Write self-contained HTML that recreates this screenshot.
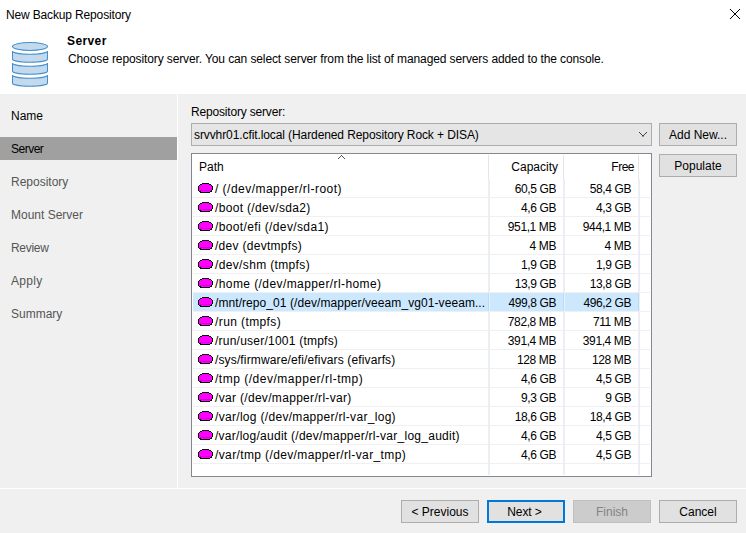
<!DOCTYPE html>
<html><head><meta charset="utf-8">
<style>
*{box-sizing:border-box}
html,body{margin:0;padding:0}
body{width:746px;height:533px;overflow:hidden;background:#f0f0f0;position:relative;font-family:"Liberation Sans",sans-serif;font-size:12px;color:#000}
.a{position:absolute;white-space:nowrap;line-height:15px}
#hdr{position:absolute;left:0;top:0;width:746px;height:94px;background:#fff}
#vline{position:absolute;left:177px;top:94px;width:1px;height:394px;background:#fff}
#hline{position:absolute;left:0;top:488px;width:746px;height:1px;background:#fff}
.nav{position:absolute;left:11px;color:#555}
#navsel{position:absolute;left:0;top:137px;width:177px;height:23px;background:#a0a0a0}
.btn{position:absolute;height:23px;width:78px;background:#e1e1e1;border:1px solid #adadad;text-align:center;line-height:15px;padding-top:4px}
#combo{position:absolute;left:191px;top:123px;width:461px;height:23px;background:#e5e5e5;border:1px solid #adadad}
#list{position:absolute;left:191px;top:153px;width:461px;height:324px;background:#fff;border:1px solid #828790;overflow:hidden}
.row{position:absolute;left:1px;width:459px;height:19px}
.gl{position:absolute;background:#f0f0f0}
.cl{position:absolute;width:1px;background:#e5e5e5}
.r{text-align:right}
</style></head><body>
<div id="hdr"></div>
<div class="a" style="left:6px;top:8px;letter-spacing:-0.15px">New Backup Repository</div>
<svg style="position:absolute;left:730px;top:9px" width="10" height="10" viewBox="0 0 10 10" shape-rendering="crispEdges" fill="#000"><rect x="0" y="0" width="1" height="1"/><rect x="9" y="0" width="1" height="1"/><rect x="1" y="1" width="1" height="1"/><rect x="8" y="1" width="1" height="1"/><rect x="2" y="2" width="1" height="1"/><rect x="7" y="2" width="1" height="1"/><rect x="3" y="3" width="1" height="1"/><rect x="6" y="3" width="1" height="1"/><rect x="4" y="4" width="1" height="1"/><rect x="5" y="4" width="1" height="1"/><rect x="5" y="5" width="1" height="1"/><rect x="4" y="5" width="1" height="1"/><rect x="6" y="6" width="1" height="1"/><rect x="3" y="6" width="1" height="1"/><rect x="7" y="7" width="1" height="1"/><rect x="2" y="7" width="1" height="1"/><rect x="8" y="8" width="1" height="1"/><rect x="1" y="8" width="1" height="1"/><rect x="9" y="9" width="1" height="1"/><rect x="0" y="9" width="1" height="1"/></svg>
<svg style="position:absolute;left:0;top:0" width="60" height="94" viewBox="0 0 60 94"><g fill="#c2d9ee" stroke="#4590cc" stroke-width="1.05"><ellipse cx="30" cy="46.5" rx="17.5" ry="4"/><path d="M12.5,51 A17.5,3.3 0 0 0 47.5,51 L47.5,59 A17.5,3.3 0 0 1 12.5,59 Z"/><path d="M12.5,63 A17.5,3.3 0 0 0 47.5,63 L47.5,71 A17.5,3.3 0 0 1 12.5,71 Z"/><path d="M12.5,75 A17.5,3.3 0 0 0 47.5,75 L47.5,83 A17.5,3.3 0 0 1 12.5,83 Z"/></g></svg>
<div class="a" style="left:67px;top:34px;font-weight:bold;letter-spacing:0.4px">Server</div>
<div class="a" style="left:68px;top:52px;letter-spacing:-0.109px">Choose repository server. You can select server from the list of managed servers added to the console.</div>

<div id="vline"></div>
<div id="hline"></div>
<div id="navsel"></div>
<div class="a nav" style="top:109px;color:#000">Name</div>
<div class="a nav" style="top:142px;color:#000;letter-spacing:-0.5px">Server</div>
<div class="a nav" style="top:175px">Repository</div>
<div class="a nav" style="top:208px">Mount Server</div>
<div class="a nav" style="top:241px;letter-spacing:-0.3px">Review</div>
<div class="a nav" style="top:274px;letter-spacing:0.3px">Apply</div>
<div class="a nav" style="top:307px">Summary</div>

<div class="a" style="left:191px;top:105px;letter-spacing:-0.18px">Repository server:</div>
<div id="combo"></div>
<div class="a" style="left:194px;top:128px;letter-spacing:-0.096px">srvvhr01.cfit.local (Hardened Repository Rock + DISA)</div>
<svg style="position:absolute;left:639px;top:132px" width="8" height="5" viewBox="0 0 8 5" shape-rendering="crispEdges" fill="#404040"><rect x="0" y="0" width="1" height="1"/><rect x="7" y="0" width="1" height="1"/><rect x="1" y="1" width="1" height="1"/><rect x="6" y="1" width="1" height="1"/><rect x="2" y="2" width="1" height="1"/><rect x="5" y="2" width="1" height="1"/><rect x="3" y="3" width="1" height="1"/><rect x="4" y="3" width="1" height="1"/><rect x="3" y="4" width="2" height="1" fill="#909090"/></svg>
<div class="btn" style="left:659px;top:123px">Add New...</div>
<div class="btn" style="left:659px;top:154px">Populate</div>

<div style="position:absolute;left:191px;top:153px;width:461px;height:324px;background:#fff;border:1px solid #828790"></div>
<div style="position:absolute;left:488px;top:155px;width:1px;height:24px;background:#e5e5e5"></div>
<div style="position:absolute;left:563px;top:155px;width:1px;height:24px;background:#e5e5e5"></div>
<div style="position:absolute;left:638px;top:155px;width:1px;height:24px;background:#e5e5e5"></div>
<svg style="position:absolute;left:338px;top:155px" width="7" height="4" viewBox="0 0 7 4" shape-rendering="crispEdges" fill="#505050"><rect x="3" y="0" width="1" height="1"/><rect x="2" y="1" width="1" height="1"/><rect x="4" y="1" width="1" height="1"/><rect x="1" y="2" width="1" height="1"/><rect x="5" y="2" width="1" height="1"/><rect x="0" y="3" width="1" height="1"/><rect x="6" y="3" width="1" height="1"/></svg>
<div class="a" style="left:199px;top:160px">Path</div>
<div class="a r" style="right:188px;top:160px">Capacity</div>
<div class="a r" style="right:112px;top:160px;letter-spacing:-0.5px">Free</div>
<div style="position:absolute;left:488px;top:179px;width:1px;height:296px;background:#e8f0fb"></div>
<div style="position:absolute;left:563px;top:179px;width:1px;height:296px;background:#e8f0fb"></div>
<div style="position:absolute;left:638px;top:179px;width:1px;height:296px;background:#e8f0fb"></div>
<div style="position:absolute;left:193px;top:197px;width:457px;height:1px;background:#f0f0f0"></div>
<div style="position:absolute;left:193px;top:216px;width:457px;height:1px;background:#f0f0f0"></div>
<div style="position:absolute;left:193px;top:235px;width:457px;height:1px;background:#f0f0f0"></div>
<div style="position:absolute;left:193px;top:254px;width:457px;height:1px;background:#f0f0f0"></div>
<div style="position:absolute;left:193px;top:273px;width:457px;height:1px;background:#f0f0f0"></div>
<div style="position:absolute;left:193px;top:292px;width:457px;height:1px;background:#f0f0f0"></div>
<div style="position:absolute;left:193px;top:311px;width:457px;height:1px;background:#f0f0f0"></div>
<div style="position:absolute;left:193px;top:330px;width:457px;height:1px;background:#f0f0f0"></div>
<div style="position:absolute;left:193px;top:349px;width:457px;height:1px;background:#f0f0f0"></div>
<div style="position:absolute;left:193px;top:368px;width:457px;height:1px;background:#f0f0f0"></div>
<div style="position:absolute;left:193px;top:387px;width:457px;height:1px;background:#f0f0f0"></div>
<div style="position:absolute;left:193px;top:406px;width:457px;height:1px;background:#f0f0f0"></div>
<div style="position:absolute;left:193px;top:425px;width:457px;height:1px;background:#f0f0f0"></div>
<div style="position:absolute;left:193px;top:444px;width:457px;height:1px;background:#f0f0f0"></div>
<div style="position:absolute;left:193px;top:463px;width:457px;height:1px;background:#f0f0f0"></div>
<div style="position:absolute;left:489px;top:179px;width:1px;height:296px;background:#ececec"></div>
<div style="position:absolute;left:564px;top:179px;width:1px;height:296px;background:#ececec"></div>
<div style="position:absolute;left:639px;top:179px;width:1px;height:296px;background:#ececec"></div>
<svg style="position:absolute;left:198px;top:183px" width="15" height="10" viewBox="0 0 15 10" shape-rendering="crispEdges"><rect x="4" y="0" width="7" height="1" fill="#000"/><rect x="2" y="1" width="2" height="1" fill="#000"/><rect x="4" y="1" width="7" height="1" fill="#ff00ff"/><rect x="11" y="1" width="2" height="1" fill="#000"/><rect x="1" y="2" width="1" height="1" fill="#000"/><rect x="2" y="2" width="11" height="1" fill="#ff00ff"/><rect x="13" y="2" width="1" height="1" fill="#000"/><rect x="0" y="3" width="1" height="1" fill="#000"/><rect x="1" y="3" width="13" height="1" fill="#ff00ff"/><rect x="14" y="3" width="1" height="1" fill="#000"/><rect x="0" y="4" width="1" height="1" fill="#000"/><rect x="1" y="4" width="13" height="1" fill="#ff00ff"/><rect x="14" y="4" width="1" height="1" fill="#000"/><rect x="0" y="5" width="1" height="1" fill="#000"/><rect x="1" y="5" width="13" height="1" fill="#ff00ff"/><rect x="14" y="5" width="1" height="1" fill="#000"/><rect x="0" y="6" width="1" height="1" fill="#000"/><rect x="1" y="6" width="13" height="1" fill="#ff00ff"/><rect x="14" y="6" width="1" height="1" fill="#000"/><rect x="0" y="7" width="1" height="1" fill="#000"/><rect x="1" y="7" width="12" height="1" fill="#ff00ff"/><rect x="13" y="7" width="1" height="1" fill="#000"/><rect x="1" y="8" width="2" height="1" fill="#000"/><rect x="3" y="8" width="9" height="1" fill="#ff00ff"/><rect x="12" y="8" width="2" height="1" fill="#000"/><rect x="2" y="9" width="10" height="1" fill="#000"/><rect x="2" y="7" width="10" height="1" fill="#d800d8"/></svg>
<div class="a" style="left:215px;top:182px;letter-spacing:0.477px">/ (/dev/mapper/rl-root)</div>
<div class="a r v" style="right:190px;top:182px;letter-spacing:-0.4px">60,5 GB</div>
<div class="a r v" style="right:115px;top:182px;letter-spacing:-0.4px">58,4 GB</div>
<svg style="position:absolute;left:198px;top:202px" width="15" height="10" viewBox="0 0 15 10" shape-rendering="crispEdges"><rect x="4" y="0" width="7" height="1" fill="#000"/><rect x="2" y="1" width="2" height="1" fill="#000"/><rect x="4" y="1" width="7" height="1" fill="#ff00ff"/><rect x="11" y="1" width="2" height="1" fill="#000"/><rect x="1" y="2" width="1" height="1" fill="#000"/><rect x="2" y="2" width="11" height="1" fill="#ff00ff"/><rect x="13" y="2" width="1" height="1" fill="#000"/><rect x="0" y="3" width="1" height="1" fill="#000"/><rect x="1" y="3" width="13" height="1" fill="#ff00ff"/><rect x="14" y="3" width="1" height="1" fill="#000"/><rect x="0" y="4" width="1" height="1" fill="#000"/><rect x="1" y="4" width="13" height="1" fill="#ff00ff"/><rect x="14" y="4" width="1" height="1" fill="#000"/><rect x="0" y="5" width="1" height="1" fill="#000"/><rect x="1" y="5" width="13" height="1" fill="#ff00ff"/><rect x="14" y="5" width="1" height="1" fill="#000"/><rect x="0" y="6" width="1" height="1" fill="#000"/><rect x="1" y="6" width="13" height="1" fill="#ff00ff"/><rect x="14" y="6" width="1" height="1" fill="#000"/><rect x="0" y="7" width="1" height="1" fill="#000"/><rect x="1" y="7" width="12" height="1" fill="#ff00ff"/><rect x="13" y="7" width="1" height="1" fill="#000"/><rect x="1" y="8" width="2" height="1" fill="#000"/><rect x="3" y="8" width="9" height="1" fill="#ff00ff"/><rect x="12" y="8" width="2" height="1" fill="#000"/><rect x="2" y="9" width="10" height="1" fill="#000"/><rect x="2" y="7" width="10" height="1" fill="#d800d8"/></svg>
<div class="a" style="left:215px;top:201px;letter-spacing:0.331px">/boot (/dev/sda2)</div>
<div class="a r v" style="right:190px;top:201px;letter-spacing:-0.4px">4,6 GB</div>
<div class="a r v" style="right:115px;top:201px;letter-spacing:-0.4px">4,3 GB</div>
<svg style="position:absolute;left:198px;top:221px" width="15" height="10" viewBox="0 0 15 10" shape-rendering="crispEdges"><rect x="4" y="0" width="7" height="1" fill="#000"/><rect x="2" y="1" width="2" height="1" fill="#000"/><rect x="4" y="1" width="7" height="1" fill="#ff00ff"/><rect x="11" y="1" width="2" height="1" fill="#000"/><rect x="1" y="2" width="1" height="1" fill="#000"/><rect x="2" y="2" width="11" height="1" fill="#ff00ff"/><rect x="13" y="2" width="1" height="1" fill="#000"/><rect x="0" y="3" width="1" height="1" fill="#000"/><rect x="1" y="3" width="13" height="1" fill="#ff00ff"/><rect x="14" y="3" width="1" height="1" fill="#000"/><rect x="0" y="4" width="1" height="1" fill="#000"/><rect x="1" y="4" width="13" height="1" fill="#ff00ff"/><rect x="14" y="4" width="1" height="1" fill="#000"/><rect x="0" y="5" width="1" height="1" fill="#000"/><rect x="1" y="5" width="13" height="1" fill="#ff00ff"/><rect x="14" y="5" width="1" height="1" fill="#000"/><rect x="0" y="6" width="1" height="1" fill="#000"/><rect x="1" y="6" width="13" height="1" fill="#ff00ff"/><rect x="14" y="6" width="1" height="1" fill="#000"/><rect x="0" y="7" width="1" height="1" fill="#000"/><rect x="1" y="7" width="12" height="1" fill="#ff00ff"/><rect x="13" y="7" width="1" height="1" fill="#000"/><rect x="1" y="8" width="2" height="1" fill="#000"/><rect x="3" y="8" width="9" height="1" fill="#ff00ff"/><rect x="12" y="8" width="2" height="1" fill="#000"/><rect x="2" y="9" width="10" height="1" fill="#000"/><rect x="2" y="7" width="10" height="1" fill="#d800d8"/></svg>
<div class="a" style="left:215px;top:220px;letter-spacing:0.370px">/boot/efi (/dev/sda1)</div>
<div class="a r v" style="right:190px;top:220px;letter-spacing:-0.4px">951,1 MB</div>
<div class="a r v" style="right:115px;top:220px;letter-spacing:-0.4px">944,1 MB</div>
<svg style="position:absolute;left:198px;top:240px" width="15" height="10" viewBox="0 0 15 10" shape-rendering="crispEdges"><rect x="4" y="0" width="7" height="1" fill="#000"/><rect x="2" y="1" width="2" height="1" fill="#000"/><rect x="4" y="1" width="7" height="1" fill="#ff00ff"/><rect x="11" y="1" width="2" height="1" fill="#000"/><rect x="1" y="2" width="1" height="1" fill="#000"/><rect x="2" y="2" width="11" height="1" fill="#ff00ff"/><rect x="13" y="2" width="1" height="1" fill="#000"/><rect x="0" y="3" width="1" height="1" fill="#000"/><rect x="1" y="3" width="13" height="1" fill="#ff00ff"/><rect x="14" y="3" width="1" height="1" fill="#000"/><rect x="0" y="4" width="1" height="1" fill="#000"/><rect x="1" y="4" width="13" height="1" fill="#ff00ff"/><rect x="14" y="4" width="1" height="1" fill="#000"/><rect x="0" y="5" width="1" height="1" fill="#000"/><rect x="1" y="5" width="13" height="1" fill="#ff00ff"/><rect x="14" y="5" width="1" height="1" fill="#000"/><rect x="0" y="6" width="1" height="1" fill="#000"/><rect x="1" y="6" width="13" height="1" fill="#ff00ff"/><rect x="14" y="6" width="1" height="1" fill="#000"/><rect x="0" y="7" width="1" height="1" fill="#000"/><rect x="1" y="7" width="12" height="1" fill="#ff00ff"/><rect x="13" y="7" width="1" height="1" fill="#000"/><rect x="1" y="8" width="2" height="1" fill="#000"/><rect x="3" y="8" width="9" height="1" fill="#ff00ff"/><rect x="12" y="8" width="2" height="1" fill="#000"/><rect x="2" y="9" width="10" height="1" fill="#000"/><rect x="2" y="7" width="10" height="1" fill="#d800d8"/></svg>
<div class="a" style="left:215px;top:239px;letter-spacing:0.286px">/dev (devtmpfs)</div>
<div class="a r v" style="right:190px;top:239px;letter-spacing:-0.4px">4 MB</div>
<div class="a r v" style="right:115px;top:239px;letter-spacing:-0.4px">4 MB</div>
<svg style="position:absolute;left:198px;top:259px" width="15" height="10" viewBox="0 0 15 10" shape-rendering="crispEdges"><rect x="4" y="0" width="7" height="1" fill="#000"/><rect x="2" y="1" width="2" height="1" fill="#000"/><rect x="4" y="1" width="7" height="1" fill="#ff00ff"/><rect x="11" y="1" width="2" height="1" fill="#000"/><rect x="1" y="2" width="1" height="1" fill="#000"/><rect x="2" y="2" width="11" height="1" fill="#ff00ff"/><rect x="13" y="2" width="1" height="1" fill="#000"/><rect x="0" y="3" width="1" height="1" fill="#000"/><rect x="1" y="3" width="13" height="1" fill="#ff00ff"/><rect x="14" y="3" width="1" height="1" fill="#000"/><rect x="0" y="4" width="1" height="1" fill="#000"/><rect x="1" y="4" width="13" height="1" fill="#ff00ff"/><rect x="14" y="4" width="1" height="1" fill="#000"/><rect x="0" y="5" width="1" height="1" fill="#000"/><rect x="1" y="5" width="13" height="1" fill="#ff00ff"/><rect x="14" y="5" width="1" height="1" fill="#000"/><rect x="0" y="6" width="1" height="1" fill="#000"/><rect x="1" y="6" width="13" height="1" fill="#ff00ff"/><rect x="14" y="6" width="1" height="1" fill="#000"/><rect x="0" y="7" width="1" height="1" fill="#000"/><rect x="1" y="7" width="12" height="1" fill="#ff00ff"/><rect x="13" y="7" width="1" height="1" fill="#000"/><rect x="1" y="8" width="2" height="1" fill="#000"/><rect x="3" y="8" width="9" height="1" fill="#ff00ff"/><rect x="12" y="8" width="2" height="1" fill="#000"/><rect x="2" y="9" width="10" height="1" fill="#000"/><rect x="2" y="7" width="10" height="1" fill="#d800d8"/></svg>
<div class="a" style="left:215px;top:258px;letter-spacing:0.353px">/dev/shm (tmpfs)</div>
<div class="a r v" style="right:190px;top:258px;letter-spacing:-0.4px">1,9 GB</div>
<div class="a r v" style="right:115px;top:258px;letter-spacing:-0.4px">1,9 GB</div>
<svg style="position:absolute;left:198px;top:278px" width="15" height="10" viewBox="0 0 15 10" shape-rendering="crispEdges"><rect x="4" y="0" width="7" height="1" fill="#000"/><rect x="2" y="1" width="2" height="1" fill="#000"/><rect x="4" y="1" width="7" height="1" fill="#ff00ff"/><rect x="11" y="1" width="2" height="1" fill="#000"/><rect x="1" y="2" width="1" height="1" fill="#000"/><rect x="2" y="2" width="11" height="1" fill="#ff00ff"/><rect x="13" y="2" width="1" height="1" fill="#000"/><rect x="0" y="3" width="1" height="1" fill="#000"/><rect x="1" y="3" width="13" height="1" fill="#ff00ff"/><rect x="14" y="3" width="1" height="1" fill="#000"/><rect x="0" y="4" width="1" height="1" fill="#000"/><rect x="1" y="4" width="13" height="1" fill="#ff00ff"/><rect x="14" y="4" width="1" height="1" fill="#000"/><rect x="0" y="5" width="1" height="1" fill="#000"/><rect x="1" y="5" width="13" height="1" fill="#ff00ff"/><rect x="14" y="5" width="1" height="1" fill="#000"/><rect x="0" y="6" width="1" height="1" fill="#000"/><rect x="1" y="6" width="13" height="1" fill="#ff00ff"/><rect x="14" y="6" width="1" height="1" fill="#000"/><rect x="0" y="7" width="1" height="1" fill="#000"/><rect x="1" y="7" width="12" height="1" fill="#ff00ff"/><rect x="13" y="7" width="1" height="1" fill="#000"/><rect x="1" y="8" width="2" height="1" fill="#000"/><rect x="3" y="8" width="9" height="1" fill="#ff00ff"/><rect x="12" y="8" width="2" height="1" fill="#000"/><rect x="2" y="9" width="10" height="1" fill="#000"/><rect x="2" y="7" width="10" height="1" fill="#d800d8"/></svg>
<div class="a" style="left:215px;top:277px;letter-spacing:0.412px">/home (/dev/mapper/rl-home)</div>
<div class="a r v" style="right:190px;top:277px;letter-spacing:-0.4px">13,9 GB</div>
<div class="a r v" style="right:115px;top:277px;letter-spacing:-0.4px">13,8 GB</div>
<div style="position:absolute;left:193px;top:293px;width:446px;height:18px;background:#cce8ff"></div>
<div style="position:absolute;left:488px;top:293px;width:1px;height:18px;background:#b7dcf9"></div>
<div style="position:absolute;left:489px;top:293px;width:1px;height:18px;background:#efefef"></div>
<div style="position:absolute;left:563px;top:293px;width:1px;height:18px;background:#b7dcf9"></div>
<div style="position:absolute;left:564px;top:293px;width:1px;height:18px;background:#efefef"></div>
<div style="position:absolute;left:638px;top:293px;width:1px;height:18px;background:#b7dcf9"></div>
<div style="position:absolute;left:639px;top:293px;width:1px;height:18px;background:#efefef"></div>
<svg style="position:absolute;left:198px;top:297px" width="15" height="10" viewBox="0 0 15 10" shape-rendering="crispEdges"><rect x="4" y="0" width="7" height="1" fill="#000"/><rect x="2" y="1" width="2" height="1" fill="#000"/><rect x="4" y="1" width="7" height="1" fill="#ff00ff"/><rect x="11" y="1" width="2" height="1" fill="#000"/><rect x="1" y="2" width="1" height="1" fill="#000"/><rect x="2" y="2" width="11" height="1" fill="#ff00ff"/><rect x="13" y="2" width="1" height="1" fill="#000"/><rect x="0" y="3" width="1" height="1" fill="#000"/><rect x="1" y="3" width="13" height="1" fill="#ff00ff"/><rect x="14" y="3" width="1" height="1" fill="#000"/><rect x="0" y="4" width="1" height="1" fill="#000"/><rect x="1" y="4" width="13" height="1" fill="#ff00ff"/><rect x="14" y="4" width="1" height="1" fill="#000"/><rect x="0" y="5" width="1" height="1" fill="#000"/><rect x="1" y="5" width="13" height="1" fill="#ff00ff"/><rect x="14" y="5" width="1" height="1" fill="#000"/><rect x="0" y="6" width="1" height="1" fill="#000"/><rect x="1" y="6" width="13" height="1" fill="#ff00ff"/><rect x="14" y="6" width="1" height="1" fill="#000"/><rect x="0" y="7" width="1" height="1" fill="#000"/><rect x="1" y="7" width="12" height="1" fill="#ff00ff"/><rect x="13" y="7" width="1" height="1" fill="#000"/><rect x="1" y="8" width="2" height="1" fill="#000"/><rect x="3" y="8" width="9" height="1" fill="#ff00ff"/><rect x="12" y="8" width="2" height="1" fill="#000"/><rect x="2" y="9" width="10" height="1" fill="#000"/><rect x="2" y="7" width="10" height="1" fill="#d800d8"/></svg>
<div class="a" style="left:215px;top:296px;letter-spacing:0.075px">/mnt/repo_01 (/dev/mapper/veeam_vg01-veeam...</div>
<div class="a r v" style="right:190px;top:296px;letter-spacing:-0.4px">499,8 GB</div>
<div class="a r v" style="right:115px;top:296px;letter-spacing:-0.4px">496,2 GB</div>
<svg style="position:absolute;left:198px;top:316px" width="15" height="10" viewBox="0 0 15 10" shape-rendering="crispEdges"><rect x="4" y="0" width="7" height="1" fill="#000"/><rect x="2" y="1" width="2" height="1" fill="#000"/><rect x="4" y="1" width="7" height="1" fill="#ff00ff"/><rect x="11" y="1" width="2" height="1" fill="#000"/><rect x="1" y="2" width="1" height="1" fill="#000"/><rect x="2" y="2" width="11" height="1" fill="#ff00ff"/><rect x="13" y="2" width="1" height="1" fill="#000"/><rect x="0" y="3" width="1" height="1" fill="#000"/><rect x="1" y="3" width="13" height="1" fill="#ff00ff"/><rect x="14" y="3" width="1" height="1" fill="#000"/><rect x="0" y="4" width="1" height="1" fill="#000"/><rect x="1" y="4" width="13" height="1" fill="#ff00ff"/><rect x="14" y="4" width="1" height="1" fill="#000"/><rect x="0" y="5" width="1" height="1" fill="#000"/><rect x="1" y="5" width="13" height="1" fill="#ff00ff"/><rect x="14" y="5" width="1" height="1" fill="#000"/><rect x="0" y="6" width="1" height="1" fill="#000"/><rect x="1" y="6" width="13" height="1" fill="#ff00ff"/><rect x="14" y="6" width="1" height="1" fill="#000"/><rect x="0" y="7" width="1" height="1" fill="#000"/><rect x="1" y="7" width="12" height="1" fill="#ff00ff"/><rect x="13" y="7" width="1" height="1" fill="#000"/><rect x="1" y="8" width="2" height="1" fill="#000"/><rect x="3" y="8" width="9" height="1" fill="#ff00ff"/><rect x="12" y="8" width="2" height="1" fill="#000"/><rect x="2" y="9" width="10" height="1" fill="#000"/><rect x="2" y="7" width="10" height="1" fill="#d800d8"/></svg>
<div class="a" style="left:215px;top:315px;letter-spacing:0.400px">/run (tmpfs)</div>
<div class="a r v" style="right:190px;top:315px;letter-spacing:-0.4px">782,8 MB</div>
<div class="a r v" style="right:115px;top:315px;letter-spacing:-0.4px">711 MB</div>
<svg style="position:absolute;left:198px;top:335px" width="15" height="10" viewBox="0 0 15 10" shape-rendering="crispEdges"><rect x="4" y="0" width="7" height="1" fill="#000"/><rect x="2" y="1" width="2" height="1" fill="#000"/><rect x="4" y="1" width="7" height="1" fill="#ff00ff"/><rect x="11" y="1" width="2" height="1" fill="#000"/><rect x="1" y="2" width="1" height="1" fill="#000"/><rect x="2" y="2" width="11" height="1" fill="#ff00ff"/><rect x="13" y="2" width="1" height="1" fill="#000"/><rect x="0" y="3" width="1" height="1" fill="#000"/><rect x="1" y="3" width="13" height="1" fill="#ff00ff"/><rect x="14" y="3" width="1" height="1" fill="#000"/><rect x="0" y="4" width="1" height="1" fill="#000"/><rect x="1" y="4" width="13" height="1" fill="#ff00ff"/><rect x="14" y="4" width="1" height="1" fill="#000"/><rect x="0" y="5" width="1" height="1" fill="#000"/><rect x="1" y="5" width="13" height="1" fill="#ff00ff"/><rect x="14" y="5" width="1" height="1" fill="#000"/><rect x="0" y="6" width="1" height="1" fill="#000"/><rect x="1" y="6" width="13" height="1" fill="#ff00ff"/><rect x="14" y="6" width="1" height="1" fill="#000"/><rect x="0" y="7" width="1" height="1" fill="#000"/><rect x="1" y="7" width="12" height="1" fill="#ff00ff"/><rect x="13" y="7" width="1" height="1" fill="#000"/><rect x="1" y="8" width="2" height="1" fill="#000"/><rect x="3" y="8" width="9" height="1" fill="#ff00ff"/><rect x="12" y="8" width="2" height="1" fill="#000"/><rect x="2" y="9" width="10" height="1" fill="#000"/><rect x="2" y="7" width="10" height="1" fill="#d800d8"/></svg>
<div class="a" style="left:215px;top:334px;letter-spacing:0.229px">/run/user/1001 (tmpfs)</div>
<div class="a r v" style="right:190px;top:334px;letter-spacing:-0.4px">391,4 MB</div>
<div class="a r v" style="right:115px;top:334px;letter-spacing:-0.4px">391,4 MB</div>
<svg style="position:absolute;left:198px;top:354px" width="15" height="10" viewBox="0 0 15 10" shape-rendering="crispEdges"><rect x="4" y="0" width="7" height="1" fill="#000"/><rect x="2" y="1" width="2" height="1" fill="#000"/><rect x="4" y="1" width="7" height="1" fill="#ff00ff"/><rect x="11" y="1" width="2" height="1" fill="#000"/><rect x="1" y="2" width="1" height="1" fill="#000"/><rect x="2" y="2" width="11" height="1" fill="#ff00ff"/><rect x="13" y="2" width="1" height="1" fill="#000"/><rect x="0" y="3" width="1" height="1" fill="#000"/><rect x="1" y="3" width="13" height="1" fill="#ff00ff"/><rect x="14" y="3" width="1" height="1" fill="#000"/><rect x="0" y="4" width="1" height="1" fill="#000"/><rect x="1" y="4" width="13" height="1" fill="#ff00ff"/><rect x="14" y="4" width="1" height="1" fill="#000"/><rect x="0" y="5" width="1" height="1" fill="#000"/><rect x="1" y="5" width="13" height="1" fill="#ff00ff"/><rect x="14" y="5" width="1" height="1" fill="#000"/><rect x="0" y="6" width="1" height="1" fill="#000"/><rect x="1" y="6" width="13" height="1" fill="#ff00ff"/><rect x="14" y="6" width="1" height="1" fill="#000"/><rect x="0" y="7" width="1" height="1" fill="#000"/><rect x="1" y="7" width="12" height="1" fill="#ff00ff"/><rect x="13" y="7" width="1" height="1" fill="#000"/><rect x="1" y="8" width="2" height="1" fill="#000"/><rect x="3" y="8" width="9" height="1" fill="#ff00ff"/><rect x="12" y="8" width="2" height="1" fill="#000"/><rect x="2" y="9" width="10" height="1" fill="#000"/><rect x="2" y="7" width="10" height="1" fill="#d800d8"/></svg>
<div class="a" style="left:215px;top:353px;letter-spacing:0.140px">/sys/firmware/efi/efivars (efivarfs)</div>
<div class="a r v" style="right:190px;top:353px;letter-spacing:-0.4px">128 MB</div>
<div class="a r v" style="right:115px;top:353px;letter-spacing:-0.4px">128 MB</div>
<svg style="position:absolute;left:198px;top:373px" width="15" height="10" viewBox="0 0 15 10" shape-rendering="crispEdges"><rect x="4" y="0" width="7" height="1" fill="#000"/><rect x="2" y="1" width="2" height="1" fill="#000"/><rect x="4" y="1" width="7" height="1" fill="#ff00ff"/><rect x="11" y="1" width="2" height="1" fill="#000"/><rect x="1" y="2" width="1" height="1" fill="#000"/><rect x="2" y="2" width="11" height="1" fill="#ff00ff"/><rect x="13" y="2" width="1" height="1" fill="#000"/><rect x="0" y="3" width="1" height="1" fill="#000"/><rect x="1" y="3" width="13" height="1" fill="#ff00ff"/><rect x="14" y="3" width="1" height="1" fill="#000"/><rect x="0" y="4" width="1" height="1" fill="#000"/><rect x="1" y="4" width="13" height="1" fill="#ff00ff"/><rect x="14" y="4" width="1" height="1" fill="#000"/><rect x="0" y="5" width="1" height="1" fill="#000"/><rect x="1" y="5" width="13" height="1" fill="#ff00ff"/><rect x="14" y="5" width="1" height="1" fill="#000"/><rect x="0" y="6" width="1" height="1" fill="#000"/><rect x="1" y="6" width="13" height="1" fill="#ff00ff"/><rect x="14" y="6" width="1" height="1" fill="#000"/><rect x="0" y="7" width="1" height="1" fill="#000"/><rect x="1" y="7" width="12" height="1" fill="#ff00ff"/><rect x="13" y="7" width="1" height="1" fill="#000"/><rect x="1" y="8" width="2" height="1" fill="#000"/><rect x="3" y="8" width="9" height="1" fill="#ff00ff"/><rect x="12" y="8" width="2" height="1" fill="#000"/><rect x="2" y="9" width="10" height="1" fill="#000"/><rect x="2" y="7" width="10" height="1" fill="#d800d8"/></svg>
<div class="a" style="left:215px;top:372px;letter-spacing:0.513px">/tmp (/dev/mapper/rl-tmp)</div>
<div class="a r v" style="right:190px;top:372px;letter-spacing:-0.4px">4,6 GB</div>
<div class="a r v" style="right:115px;top:372px;letter-spacing:-0.4px">4,5 GB</div>
<svg style="position:absolute;left:198px;top:392px" width="15" height="10" viewBox="0 0 15 10" shape-rendering="crispEdges"><rect x="4" y="0" width="7" height="1" fill="#000"/><rect x="2" y="1" width="2" height="1" fill="#000"/><rect x="4" y="1" width="7" height="1" fill="#ff00ff"/><rect x="11" y="1" width="2" height="1" fill="#000"/><rect x="1" y="2" width="1" height="1" fill="#000"/><rect x="2" y="2" width="11" height="1" fill="#ff00ff"/><rect x="13" y="2" width="1" height="1" fill="#000"/><rect x="0" y="3" width="1" height="1" fill="#000"/><rect x="1" y="3" width="13" height="1" fill="#ff00ff"/><rect x="14" y="3" width="1" height="1" fill="#000"/><rect x="0" y="4" width="1" height="1" fill="#000"/><rect x="1" y="4" width="13" height="1" fill="#ff00ff"/><rect x="14" y="4" width="1" height="1" fill="#000"/><rect x="0" y="5" width="1" height="1" fill="#000"/><rect x="1" y="5" width="13" height="1" fill="#ff00ff"/><rect x="14" y="5" width="1" height="1" fill="#000"/><rect x="0" y="6" width="1" height="1" fill="#000"/><rect x="1" y="6" width="13" height="1" fill="#ff00ff"/><rect x="14" y="6" width="1" height="1" fill="#000"/><rect x="0" y="7" width="1" height="1" fill="#000"/><rect x="1" y="7" width="12" height="1" fill="#ff00ff"/><rect x="13" y="7" width="1" height="1" fill="#000"/><rect x="1" y="8" width="2" height="1" fill="#000"/><rect x="3" y="8" width="9" height="1" fill="#ff00ff"/><rect x="12" y="8" width="2" height="1" fill="#000"/><rect x="2" y="9" width="10" height="1" fill="#000"/><rect x="2" y="7" width="10" height="1" fill="#d800d8"/></svg>
<div class="a" style="left:215px;top:391px;letter-spacing:0.317px">/var (/dev/mapper/rl-var)</div>
<div class="a r v" style="right:190px;top:391px;letter-spacing:-0.4px">9,3 GB</div>
<div class="a r v" style="right:115px;top:391px;letter-spacing:-0.4px">9 GB</div>
<svg style="position:absolute;left:198px;top:411px" width="15" height="10" viewBox="0 0 15 10" shape-rendering="crispEdges"><rect x="4" y="0" width="7" height="1" fill="#000"/><rect x="2" y="1" width="2" height="1" fill="#000"/><rect x="4" y="1" width="7" height="1" fill="#ff00ff"/><rect x="11" y="1" width="2" height="1" fill="#000"/><rect x="1" y="2" width="1" height="1" fill="#000"/><rect x="2" y="2" width="11" height="1" fill="#ff00ff"/><rect x="13" y="2" width="1" height="1" fill="#000"/><rect x="0" y="3" width="1" height="1" fill="#000"/><rect x="1" y="3" width="13" height="1" fill="#ff00ff"/><rect x="14" y="3" width="1" height="1" fill="#000"/><rect x="0" y="4" width="1" height="1" fill="#000"/><rect x="1" y="4" width="13" height="1" fill="#ff00ff"/><rect x="14" y="4" width="1" height="1" fill="#000"/><rect x="0" y="5" width="1" height="1" fill="#000"/><rect x="1" y="5" width="13" height="1" fill="#ff00ff"/><rect x="14" y="5" width="1" height="1" fill="#000"/><rect x="0" y="6" width="1" height="1" fill="#000"/><rect x="1" y="6" width="13" height="1" fill="#ff00ff"/><rect x="14" y="6" width="1" height="1" fill="#000"/><rect x="0" y="7" width="1" height="1" fill="#000"/><rect x="1" y="7" width="12" height="1" fill="#ff00ff"/><rect x="13" y="7" width="1" height="1" fill="#000"/><rect x="1" y="8" width="2" height="1" fill="#000"/><rect x="3" y="8" width="9" height="1" fill="#ff00ff"/><rect x="12" y="8" width="2" height="1" fill="#000"/><rect x="2" y="9" width="10" height="1" fill="#000"/><rect x="2" y="7" width="10" height="1" fill="#d800d8"/></svg>
<div class="a" style="left:215px;top:410px;letter-spacing:0.309px">/var/log (/dev/mapper/rl-var_log)</div>
<div class="a r v" style="right:190px;top:410px;letter-spacing:-0.4px">18,6 GB</div>
<div class="a r v" style="right:115px;top:410px;letter-spacing:-0.4px">18,4 GB</div>
<svg style="position:absolute;left:198px;top:430px" width="15" height="10" viewBox="0 0 15 10" shape-rendering="crispEdges"><rect x="4" y="0" width="7" height="1" fill="#000"/><rect x="2" y="1" width="2" height="1" fill="#000"/><rect x="4" y="1" width="7" height="1" fill="#ff00ff"/><rect x="11" y="1" width="2" height="1" fill="#000"/><rect x="1" y="2" width="1" height="1" fill="#000"/><rect x="2" y="2" width="11" height="1" fill="#ff00ff"/><rect x="13" y="2" width="1" height="1" fill="#000"/><rect x="0" y="3" width="1" height="1" fill="#000"/><rect x="1" y="3" width="13" height="1" fill="#ff00ff"/><rect x="14" y="3" width="1" height="1" fill="#000"/><rect x="0" y="4" width="1" height="1" fill="#000"/><rect x="1" y="4" width="13" height="1" fill="#ff00ff"/><rect x="14" y="4" width="1" height="1" fill="#000"/><rect x="0" y="5" width="1" height="1" fill="#000"/><rect x="1" y="5" width="13" height="1" fill="#ff00ff"/><rect x="14" y="5" width="1" height="1" fill="#000"/><rect x="0" y="6" width="1" height="1" fill="#000"/><rect x="1" y="6" width="13" height="1" fill="#ff00ff"/><rect x="14" y="6" width="1" height="1" fill="#000"/><rect x="0" y="7" width="1" height="1" fill="#000"/><rect x="1" y="7" width="12" height="1" fill="#ff00ff"/><rect x="13" y="7" width="1" height="1" fill="#000"/><rect x="1" y="8" width="2" height="1" fill="#000"/><rect x="3" y="8" width="9" height="1" fill="#ff00ff"/><rect x="12" y="8" width="2" height="1" fill="#000"/><rect x="2" y="9" width="10" height="1" fill="#000"/><rect x="2" y="7" width="10" height="1" fill="#d800d8"/></svg>
<div class="a" style="left:215px;top:429px;letter-spacing:0.268px">/var/log/audit (/dev/mapper/rl-var_log_audit)</div>
<div class="a r v" style="right:190px;top:429px;letter-spacing:-0.4px">4,6 GB</div>
<div class="a r v" style="right:115px;top:429px;letter-spacing:-0.4px">4,5 GB</div>
<svg style="position:absolute;left:198px;top:449px" width="15" height="10" viewBox="0 0 15 10" shape-rendering="crispEdges"><rect x="4" y="0" width="7" height="1" fill="#000"/><rect x="2" y="1" width="2" height="1" fill="#000"/><rect x="4" y="1" width="7" height="1" fill="#ff00ff"/><rect x="11" y="1" width="2" height="1" fill="#000"/><rect x="1" y="2" width="1" height="1" fill="#000"/><rect x="2" y="2" width="11" height="1" fill="#ff00ff"/><rect x="13" y="2" width="1" height="1" fill="#000"/><rect x="0" y="3" width="1" height="1" fill="#000"/><rect x="1" y="3" width="13" height="1" fill="#ff00ff"/><rect x="14" y="3" width="1" height="1" fill="#000"/><rect x="0" y="4" width="1" height="1" fill="#000"/><rect x="1" y="4" width="13" height="1" fill="#ff00ff"/><rect x="14" y="4" width="1" height="1" fill="#000"/><rect x="0" y="5" width="1" height="1" fill="#000"/><rect x="1" y="5" width="13" height="1" fill="#ff00ff"/><rect x="14" y="5" width="1" height="1" fill="#000"/><rect x="0" y="6" width="1" height="1" fill="#000"/><rect x="1" y="6" width="13" height="1" fill="#ff00ff"/><rect x="14" y="6" width="1" height="1" fill="#000"/><rect x="0" y="7" width="1" height="1" fill="#000"/><rect x="1" y="7" width="12" height="1" fill="#ff00ff"/><rect x="13" y="7" width="1" height="1" fill="#000"/><rect x="1" y="8" width="2" height="1" fill="#000"/><rect x="3" y="8" width="9" height="1" fill="#ff00ff"/><rect x="12" y="8" width="2" height="1" fill="#000"/><rect x="2" y="9" width="10" height="1" fill="#000"/><rect x="2" y="7" width="10" height="1" fill="#d800d8"/></svg>
<div class="a" style="left:215px;top:448px;letter-spacing:0.375px">/var/tmp (/dev/mapper/rl-var_tmp)</div>
<div class="a r v" style="right:190px;top:448px;letter-spacing:-0.4px">4,6 GB</div>
<div class="a r v" style="right:115px;top:448px;letter-spacing:-0.4px">4,5 GB</div>
<div class="btn" style="left:401px;top:500px">&lt; Previous</div>
<div class="btn" style="left:487px;top:500px;border:2px solid #0078d7;padding-top:3px"><span style="position:relative;left:-1.5px;letter-spacing:-0.1px">Next &gt;</span></div>
<div class="btn" style="left:573px;top:500px;background:#cccccc;border-color:#bfbfbf;color:#838383">Finish</div>
<div class="btn" style="left:659px;top:500px">Cancel</div>
</body></html>
